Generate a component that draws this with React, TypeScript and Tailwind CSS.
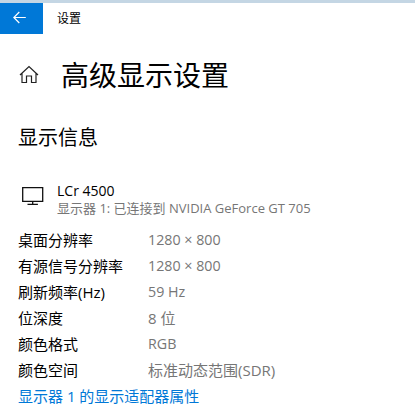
const font = "font-['Open_Sans','Noto_Sans_CJK_SC',sans-serif]";

const rows = [
  { label: '桌面分辨率', value: '1280 × 800', size: 'text-[14.250px]' },
  { label: '有源信号分辨率', value: '1280 × 800', size: 'text-[14.250px]' },
  { label: '刷新频率(Hz)', value: '59 Hz', size: 'text-[14.250px]' },
  { label: '位深度', value: '8 位', size: 'text-[15px]' },
  { label: '颜色格式', value: 'RGB', size: 'text-[14.250px]' },
  { label: '颜色空间', value: '标准动态范围(SDR)', size: 'text-[15px]' },
];

export default function App() {
  return (
    <div className={`h-[416px] w-[415px] overflow-hidden bg-white text-black ${font}`}>
      <div className="h-[3px] bg-[#c4d6e4]" />
      <div className="flex h-[31px] items-center">
        <div className="flex h-[31px] w-[43px] items-center bg-[#0078d7] pb-[3px] pl-[13px]">
          <svg width="13" height="13" viewBox="0 0 13 13" fill="none" stroke="white" strokeWidth="1.2">
            <path d="M.8 6.500h12M6.300 1 .8 6.500 6.300 12" />
          </svg>
        </div>
        <span className="ml-[14px] text-[12px] leading-none">设置</span>
      </div>

      <div className="mt-[16px] flex h-[50px] items-center pl-[19px]">
        <svg width="20" height="20" viewBox="0 0 20 20" fill="none" stroke="#222" strokeWidth="1.2">
          <path d="M1 10 10 1.500l9 8.500M3 8v9.500h4.500V11h5v6.500H17V8" />
        </svg>
        <h1 className="ml-[22px] text-[28px] leading-none">高级显示设置</h1>
      </div>

      <h2 className="mt-[24px] pl-[18px] text-[20px] leading-[28px]">显示信息</h2>

      <div className="mt-[29px] flex pl-[22px]">
        <svg className="mt-[6px]" width="22" height="18" viewBox="0 0 22 18" fill="none" stroke="#111" strokeWidth="1.3">
          <path d="M.7.7h20v13.600H.7zM10.700 14.300v3M5.500 17.300h10.400" />
        </svg>
        <div className="ml-[13px]">
          <div className="text-[14px] leading-[19px]">LCr 4500</div>
          <div className="text-[13px] leading-[17px] text-[#767676]">显示器 1: 已连接到 NVIDIA GeForce GT 705</div>
        </div>
      </div>

      <div className="mt-[10px] pl-[18px]">
        {rows.map((row) => (
          <div key={row.label} className="flex h-[26px] items-center text-[15px]">
            <span className="w-[130px]">{row.label}</span>
            <span className={`${row.size} text-[#767676]`}>{row.value}</span>
          </div>
        ))}
        <div className="flex h-[26px] items-center text-[15px] text-[#0078d7]">显示器 1 的显示适配器属性</div>
      </div>
    </div>
  );
}
